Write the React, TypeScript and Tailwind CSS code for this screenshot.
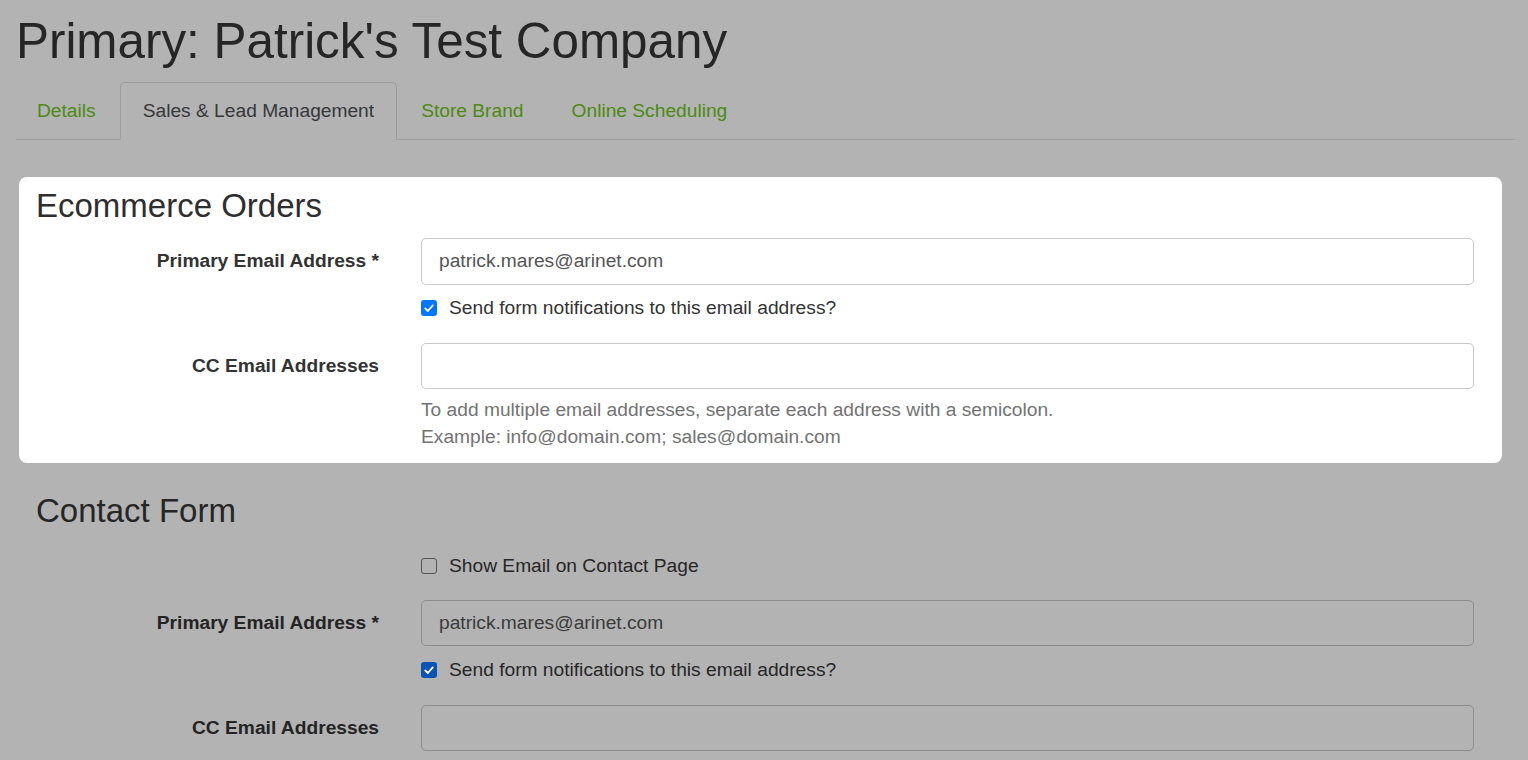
import React from 'react';

const Check: React.FC<{ checked: boolean; dim?: boolean }> = ({ checked, dim }) => {
  if (!checked) {
    return <span className="w-4 h-4 shrink-0 rounded-[3px] border border-[#555]" />;
  }
  return (
    <span
      className={`w-4 h-4 shrink-0 rounded-[3px] flex items-center justify-center ${
        dim ? 'bg-[#0a52b3]' : 'bg-[#0075ff]'
      }`}
    >
      <svg viewBox="0 0 16 16" className="w-[12px] h-[12px]" fill="none">
        <path d="M3 8.5 L6.5 12 L13 4.5" stroke="#fff" strokeWidth="2.4" strokeLinecap="round" strokeLinejoin="round" />
      </svg>
    </span>
  );
};

const App: React.FC = () => {
  const tabs = ['Details', 'Sales & Lead Management', 'Store Brand', 'Online Scheduling'];

  return (
    <div className="min-h-screen bg-[#b3b3b3] font-['Liberation_Sans',Arial,sans-serif] pl-4 pr-[13px] pt-3 pb-4">
      <h1 className="text-[49.4px] leading-[57.6px] text-[#262626]">Primary: Patrick's Test Company</h1>

      {/* Tabs */}
      <ul className="mt-[12.4px] flex border-b border-[#9c9c9c]">
        {tabs.map((t, i) => (
          <li
            key={t}
            className={`-mb-px py-[13.6px] text-[19.2px] leading-[28.8px] border rounded-t-[5px] ${
              i === 2 ? 'mr-[6px]' : 'mr-[3px]'
            } ${
              i === 1
                ? 'px-[22px] border-[#9c9c9c] border-b-[#b3b3b3] text-[#35383a]'
                : 'px-5 border-transparent text-[#4c8a12]'
            }`}
          >
            {t}
          </li>
        ))}
      </ul>

      {/* Ecommerce Orders (highlighted) */}
      <section className="mt-[37px] ml-[3px] mr-[13px] bg-white rounded-[8px] pl-[17px] pr-[28px] pt-[10px] pb-[12.5px]">
        <h3 className="text-[33px] leading-[37px] text-[#2e2e2e]">Ecommerce Orders</h3>

        <div className="mt-[14px] flex items-center gap-[42px]">
          <label className="w-[343px] shrink-0 text-right font-bold text-[19.2px] text-[#333]">Primary Email Address *</label>
          <div className="flex-1 h-[47px] border border-[#c9c9c9] rounded-[5px] px-[17px] flex items-center text-[19.2px] text-[#555]">
            patrick.mares@arinet.com
          </div>
        </div>
        <div className="mt-[9.5px] pl-[385px] flex items-center gap-3 text-[19.2px] leading-[27px] text-[#333]">
          <Check checked />
          <span>Send form notifications to this email address?</span>
        </div>

        <div className="mt-[21.5px] flex items-center gap-[42px]">
          <label className="w-[343px] shrink-0 text-right font-bold text-[19.2px] text-[#333]">CC Email Addresses</label>
          <div className="flex-1 h-[46px] border border-[#c9c9c9] rounded-[5px]" />
        </div>
        <div className="mt-[7.5px] pl-[385px] text-[19.2px] leading-[27px] text-[#737373]">
          <p>To add multiple email addresses, separate each address with a semicolon.</p>
          <p>Example: info@domain.com; sales@domain.com</p>
        </div>
      </section>

      {/* Contact Form (dimmed) */}
      <section className="mt-[29px] ml-[3px] mr-[13px] pl-[17px] pr-[28px]">
        <h3 className="text-[33px] leading-[37px] text-[#262626]">Contact Form</h3>

        <div className="mt-[23.5px] pl-[385px] flex items-center gap-3 text-[19.2px] leading-[27px] text-[#262626]">
          <Check checked={false} />
          <span>Show Email on Contact Page</span>
        </div>

        <div className="mt-[20.5px] flex items-center gap-[42px]">
          <label className="w-[343px] shrink-0 text-right font-bold text-[19.2px] text-[#242424]">Primary Email Address *</label>
          <div className="flex-1 h-[46px] border border-[#8c8c8c] rounded-[5px] px-[17px] flex items-center text-[19.2px] text-[#3b3b3b]">
            patrick.mares@arinet.com
          </div>
        </div>
        <div className="mt-[10.5px] pl-[385px] flex items-center gap-3 text-[19.2px] leading-[27px] text-[#262626]">
          <Check checked dim />
          <span>Send form notifications to this email address?</span>
        </div>

        <div className="mt-[21.5px] flex items-center gap-[42px]">
          <label className="w-[343px] shrink-0 text-right font-bold text-[19.2px] text-[#242424]">CC Email Addresses</label>
          <div className="flex-1 h-[46px] border border-[#8c8c8c] rounded-[5px]" />
        </div>
      </section>
    </div>
  );
};

export default App;
